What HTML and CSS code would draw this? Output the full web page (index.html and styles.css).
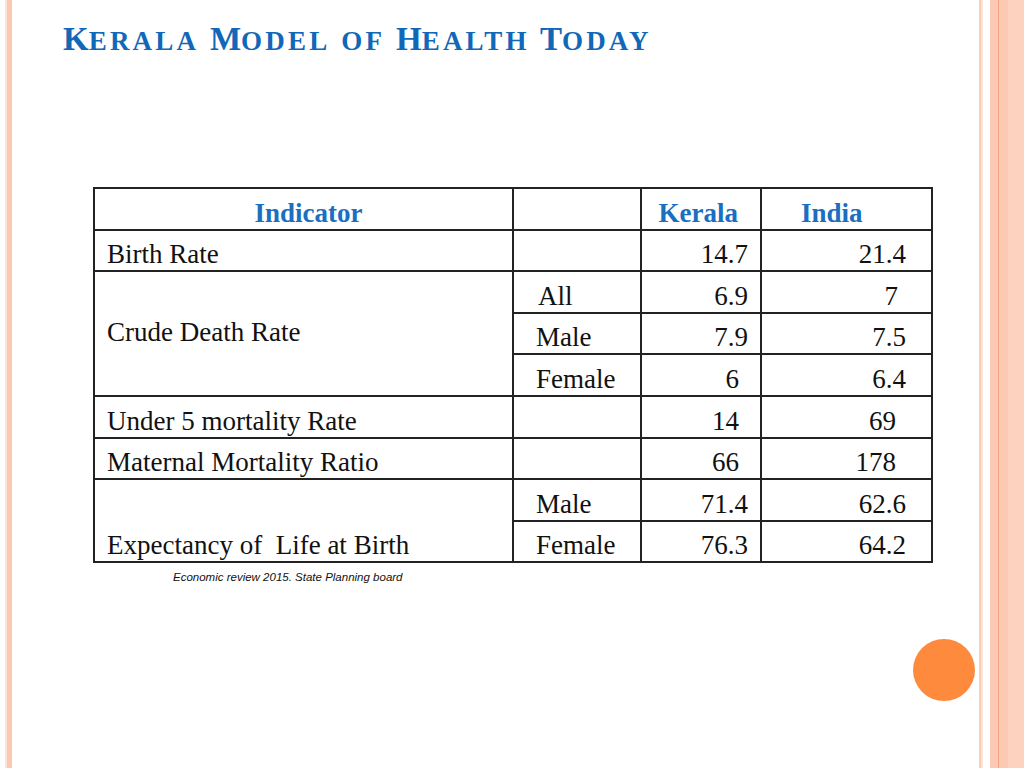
FILE: index.html
```html
<!DOCTYPE html>
<html lang="en">
<head>
<meta charset="utf-8">
<title>Kerala Model of Health Today</title>
<link rel="stylesheet" href="styles.css">
</head>
<body>
<div class="slide">
  <h1 class="title">K<span class="sc">erala</span> M<span class="sc">odel of</span> H<span class="sc">ealth</span> T<span class="sc">oday</span></h1>
  <table class="data">
    <colgroup>
      <col class="c1"><col class="c2"><col class="c3"><col class="c4">
    </colgroup>
    <tr class="head">
      <th class="h-ind">Indicator</th>
      <th></th>
      <th class="h-ker">Kerala</th>
      <th class="h-ind2">India</th>
    </tr>
    <tr>
      <td class="lbl">Birth Rate</td>
      <td></td>
      <td class="k">14.7</td>
      <td class="i">21.4</td>
    </tr>
    <tr>
      <td class="lbl mid" rowspan="3">Crude Death Rate</td>
      <td class="sub sub-all">All</td>
      <td class="k">6.9</td>
      <td class="i i3">7</td>
    </tr>
    <tr>
      <td class="sub">Male</td>
      <td class="k">7.9</td>
      <td class="i">7.5</td>
    </tr>
    <tr>
      <td class="sub">Female</td>
      <td class="k k2">6</td>
      <td class="i">6.4</td>
    </tr>
    <tr>
      <td class="lbl">Under 5 mortality Rate</td>
      <td></td>
      <td class="k k2">14</td>
      <td class="i i2">69</td>
    </tr>
    <tr>
      <td class="lbl">Maternal Mortality Ratio</td>
      <td></td>
      <td class="k k2">66</td>
      <td class="i i2">178</td>
    </tr>
    <tr>
      <td class="lbl" rowspan="2">Expectancy of&nbsp; Life at Birth</td>
      <td class="sub">Male</td>
      <td class="k">71.4</td>
      <td class="i">62.6</td>
    </tr>
    <tr>
      <td class="sub">Female</td>
      <td class="k">76.3</td>
      <td class="i">64.2</td>
    </tr>
  </table>
  <p class="source">Economic review 2015. State Planning board</p>
  <div class="dot"></div>
</div>
</body>
</html>
```
FILE: styles.css
```css
html, body {
  margin: 0;
  padding: 0;
}
body {
  width: 1024px;
  height: 768px;
  overflow: hidden;
  background:
    linear-gradient(to right,
      transparent 0 5px,
      #fde2d5 5px 7px,
      #fbc9b2 7px 12px,
      transparent 12px 979px,
      #fbcdb9 979px 981px,
      #fde3d7 981px 983px,
      transparent 983px 990px,
      #fccab4 990px 998px,
      #f5a37c 998px 999px,
      #fcc9b2 999px 1008px,
      #fdd2bf 1008px 1024px);
  font-family: "Liberation Serif", "Times New Roman", serif;
  color: #111;
}
.slide {
  position: relative;
  width: 1024px;
  height: 768px;
}
.title {
  margin: 0;
  padding: 19px 0 0 63px;
  height: 42px;
  font-size: 33px;
  font-weight: bold;
  line-height: 40px;
  color: #1168b8;
  word-spacing: 2.5px;
  white-space: nowrap;
}
.title .sc {
  font-size: 27px;
  text-transform: uppercase;
  letter-spacing: 3.2px;
}
.data {
  margin: 126px 0 0 93px;
  border-collapse: collapse;
  table-layout: fixed;
  width: 838px;
  font-size: 27px;
}
.c1 { width: 419px; }
.c2 { width: 128px; }
.c3 { width: 120px; }
.c4 { width: 171px; }
.data th, .data td {
  border: 2px solid #222;
  padding: 0 0 1px 0;
  height: 38px;
  vertical-align: bottom;
  line-height: 30px;
  white-space: nowrap;
  box-sizing: border-box;
}
.data tr { height: 41.6px; }
.data th {
  color: #1a6fc0;
  font-weight: bold;
  font-size: 27px;
  padding-bottom: 1px;
}
.data .h-ind { text-align: center; padding-left: 10px; }
.data .h-ker { text-align: right; padding-right: 22px; }
.data .h-ind2 { text-align: left; padding-left: 39px; }
.data .lbl { padding-left: 12px; text-align: left; }
.data .mid { vertical-align: middle; padding-bottom: 4px; }
.data .sub { padding-left: 22px; text-align: left; }
.data .sub-all { padding-left: 24px; }
.data .k { text-align: right; padding-right: 12px; }
.data .k2 { padding-right: 21px; }
.data .i { text-align: right; padding-right: 25px; }
.data .i2 { padding-right: 35px; }
.data .i3 { padding-right: 33px; }
.source {
  margin: 7px 0 0 173px;
  font-family: "Liberation Sans", Arial, sans-serif;
  font-style: italic;
  font-size: 11.5px;
  line-height: 14px;
  color: #111;
}
.dot {
  position: absolute;
  left: 913px;
  top: 639px;
  width: 62px;
  height: 62px;
  border-radius: 50%;
  background: #fd8a3d;
}
```
